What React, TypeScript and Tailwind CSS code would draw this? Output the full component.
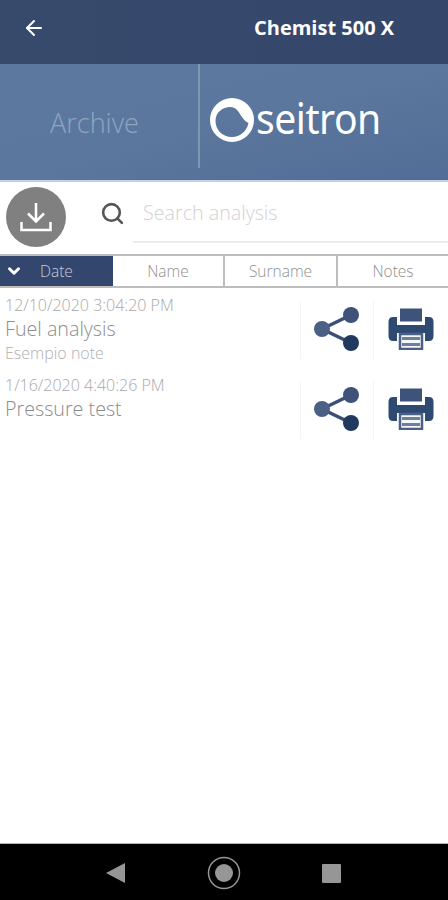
import { ArrowLeft, ChevronDown, Search } from "lucide-react";

const FONT = "font-['Open_Sans','Noto_Sans',sans-serif]";

const analyses = [
  { date: "12/10/2020 3:04:20 PM", title: "Fuel analysis", note: "Esempio note" },
  { date: "1/16/2020 4:40:26 PM", title: "Pressure test", note: "" },
];

function ShareIcon() {
  return (
    <svg width="46" height="46" viewBox="0 0 46 46">
      <path d="M37 9 L8 23 L37 37" fill="none" stroke="#3a5077" strokeWidth="3.5" />
      <circle cx="37" cy="9" r="8" fill="#3d5379" />
      <circle cx="8" cy="23" r="8" fill="#4a6085" />
      <circle cx="37" cy="37" r="8" fill="#20395f" />
    </svg>
  );
}

function PrinterIcon() {
  return (
    <svg width="46" height="42" viewBox="0 0 46 42">
      <rect x="12" y="0.500" width="22" height="13" fill="#3d5379" />
      <path d="M5 9 H9 V17 H37 V9 H41 Q45.500 9 45.500 14 V28 Q45.500 33 41 33 H37 V25 H9 V33 H5 Q0.500 33 0.500 28 V14 Q0.500 9 5 9 Z" fill="#2f4a70" />
      <rect x="12" y="26" width="22" height="15" fill="#f4f6f8" stroke="#4a6085" strokeWidth="2.500" />
      <rect x="14" y="29" width="18" height="3" fill="#6d7f9b" />
      <rect x="14" y="35" width="18" height="3" fill="#6d7f9b" />
    </svg>
  );
}

function SeitronMark() {
  return (
    <svg width="44" height="44" viewBox="0 0 44 44">
      <path
        fillRule="evenodd"
        fill="#ffffff"
        d="M22 0 A22 22 0 1 1 22 44 A22 22 0 1 1 22 0 Z M5.500 23 C5.500 32 12.500 39 22 39 C30 39 37 33 38.500 25 C36 24 34 22 32 19 C29 15 27 9 20 9 C13 9 5.500 14 5.500 23 Z"
      />
    </svg>
  );
}

export default function App() {
  return (
    <div className={`w-[448px] h-[900px] flex flex-col bg-white overflow-hidden ${FONT}`}>
      {/* Title bar */}
      <div className="h-16 flex items-center pb-2 bg-gradient-to-r from-[#384a6c] to-[#34466a]">
        <ArrowLeft className="w-6 h-6 ml-[22px] text-white" strokeWidth={2} />
        <span className="ml-[208px] text-[20px] font-bold text-white leading-none">Chemist 500 X</span>
      </div>

      {/* Banner */}
      <div className="h-[116px] flex bg-gradient-to-br from-[#5c789e] via-[#5b779d] to-[#526d96]">
        <div className="w-[198px] h-[104px] flex items-center justify-center pt-[15px] pr-[9px]">
          <span className="text-[27px] font-light text-[#8fa5c1]">Archive</span>
        </div>
        <div className="w-[2px] h-[104px] bg-[#7f96b5]" />
        <div className="flex items-center h-[116px] pl-[10px] pb-[4px]">
          <SeitronMark />
          <span className="text-[42px] leading-none text-white font-['Noto_Sans',sans-serif] tracking-[-0.5px] ml-[2px] mb-[5px] scale-x-[0.93] origin-left">
            seitron
          </span>
        </div>
      </div>

      {/* Search row */}
      <div className="h-[74px] flex items-start border-t-2 border-[#c3cfe2]">
        <div className="w-[60px] h-[60px] ml-[6px] mt-[5px] shrink-0 rounded-full bg-[#808080] flex items-center justify-center">
          <svg width="34" height="34" viewBox="0 0 34 34" fill="none" stroke="#ffffff" strokeWidth="2.500">
            <path d="M17 3 V21 M9 13.500 L17 21.500 L25 13.500" />
            <path d="M2.500 22 V30 H31.500 V22" />
          </svg>
        </div>
        <Search className="w-[25px] h-[25px] ml-[34px] mt-[19px] text-[#555555]" strokeWidth={2.5} />
        <div className="ml-[8px] flex-1 h-[61px] border-b-2 border-[#ececec] pl-[10px] pt-[20px]">
          <span className="text-[19.7px] font-light text-[#d2d2d2] leading-none">Search analysis</span>
        </div>
      </div>

      {/* Sort tabs */}
      <div className="h-[34px] flex border-y-2 border-[#bdbdbd] text-[15.5px] font-light text-[#8f8f8f]">
        <div className="w-[113px] flex items-center bg-[#33466d] text-[#c3cede]">
          <ChevronDown className="w-[18px] h-[18px] ml-[5px] text-white" strokeWidth={4} />
          <span className="ml-[17px] pt-[2px]">Date</span>
        </div>
        <div className="w-[112px] flex items-center justify-center pt-[2px] border-r-2 border-[#bdbdbd]">Name</div>
        <div className="w-[113px] flex items-center justify-center pt-[2px] border-r-2 border-[#bdbdbd]">Surname</div>
        <div className="flex-1 flex items-center justify-center pt-[2px]">Notes</div>
      </div>

      {/* Analysis list */}
      <div className="flex-1 flex flex-col pt-[7px]">
        {analyses.map((a) => (
          <div key={a.date} className="h-[80px] flex">
            <div className="w-[300px] pl-[5px] flex flex-col">
              <span className="text-[16px] leading-[20px] font-light text-[#a8a8a8]">{a.date}</span>
              <span className="text-[19.700px] leading-[28px] font-light text-[#8c8c8c]">{a.title}</span>
              <span className="text-[16px] leading-[20px] font-light text-[#b0b0b0]">{a.note}</span>
            </div>
            <div className="w-[74px] h-[58px] mt-[6px] pb-[2px] pr-[1px] flex items-center justify-center border-x border-[#f4f4f4]">
              <ShareIcon />
            </div>
            <div className="flex-1 h-[58px] mt-[6px] pb-[2px] flex items-center justify-center">
              <PrinterIcon />
            </div>
          </div>
        ))}
      </div>

      {/* Android nav bar */}
      <div className="h-[57px] flex items-center pt-[2px] pl-[106px] bg-black border-t border-[#b5b5b5]">
        <svg width="19" height="20" viewBox="0 0 19 20" className="mr-[82px]">
          <path d="M19 0 V20 L0 10 Z" fill="#969696" />
        </svg>
        <svg width="34" height="34" viewBox="0 0 34 34">
          <circle cx="17" cy="17" r="15.500" fill="none" stroke="#969696" strokeWidth="1.500" />
          <circle cx="17" cy="17" r="9" fill="#969696" />
        </svg>
        <div className="w-[19px] h-[19px] ml-[81px] rounded-[1px] bg-[#969696]" />
      </div>
    </div>
  );
}
